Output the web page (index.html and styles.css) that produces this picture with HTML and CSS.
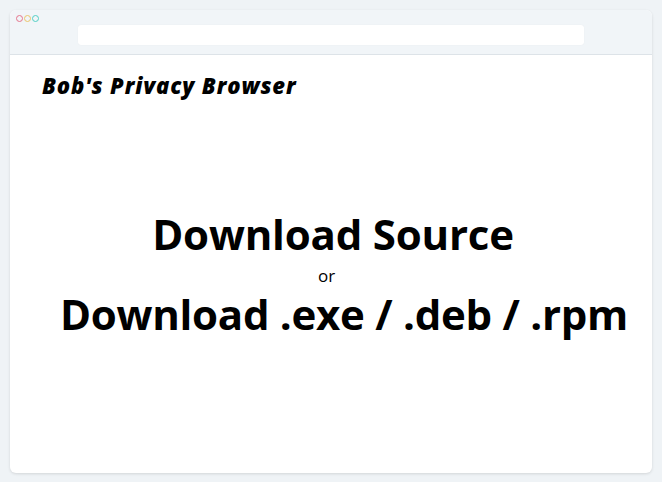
FILE: index.html
```html
<!DOCTYPE html>
<html>
<head>
<meta charset="utf-8">
<link rel="stylesheet" href="styles.css">
</head>
<body>
<div class="window">
  <div class="toolbar">
    <div class="dots">
      <span class="dot dot-red"></span>
      <span class="dot dot-yellow"></span>
      <span class="dot dot-green"></span>
    </div>
    <div class="address"></div>
  </div>
  <div class="content">
    <div class="brand">Bob's Privacy Browser</div>
    <div class="downloads">
      <h1 class="source">Download Source</h1>
      <div class="or">or</div>
      <h1 class="binaries">Download .exe / .deb / .rpm</h1>
    </div>
  </div>
</div>
</body>
</html>
```
FILE: styles.css
```css
html, body {
  margin: 0;
  padding: 0;
  background: #eff3f6;
}
body {
  padding: 10px 10px 9px;
  font-family: "Open Sans", sans-serif;
  color: #000;
}
.window {
  height: 463px;
  background: #fff;
  border-radius: 6px;
  box-shadow: 0 1px 3px rgba(0, 0, 0, 0.12);
  display: flex;
  flex-direction: column;
  overflow: hidden;
}
.toolbar {
  height: 45px;
  background: #f1f5f8;
  border-bottom: 1px solid #dde3e8;
  position: relative;
  display: flex;
  justify-content: center;
  padding-top: 15px;
  box-sizing: border-box;
}
.dots {
  position: absolute;
  left: 6px;
  top: 5px;
  display: flex;
  gap: 1px;
}
.dot {
  width: 5px;
  height: 5px;
  border-radius: 50%;
  border: 1.5px solid;
}
.dot-red { border-color: #e4748c; }
.dot-yellow { border-color: #eac46b; }
.dot-green { border-color: #52cfc4; }
.address {
  width: 506px;
  height: 20px;
  background: #fff;
  border-radius: 3px;
  margin-left: -1px;
  box-shadow: 0 0 1px rgba(0,0,0,0.08);
}
.content {
  flex: 1;
  padding: 16px 32px;
}
.brand {
  font-family: "Open Sans", sans-serif;
  font-weight: 800;
  font-style: italic;
  font-size: 22px;
  letter-spacing: 0.9px;
  line-height: 28px;
}
.downloads {
  margin-top: 109px;
  text-align: center;
}
.source, .binaries {
  margin: 0;
  font-weight: 700;
  font-size: 42px;
  line-height: 52px;
  letter-spacing: -0.2px;
}
.source {
  margin-left: 2px;
  margin-right: -2px;
}
.or {
  font-size: 17px;
  line-height: 26px;
  margin: 3px 0 0;
  margin-left: -9px;
}
.binaries {
  margin-left: 13px;
  margin-right: -13px;
  margin-top: -1px;
  letter-spacing: -0.27px;
}
```
